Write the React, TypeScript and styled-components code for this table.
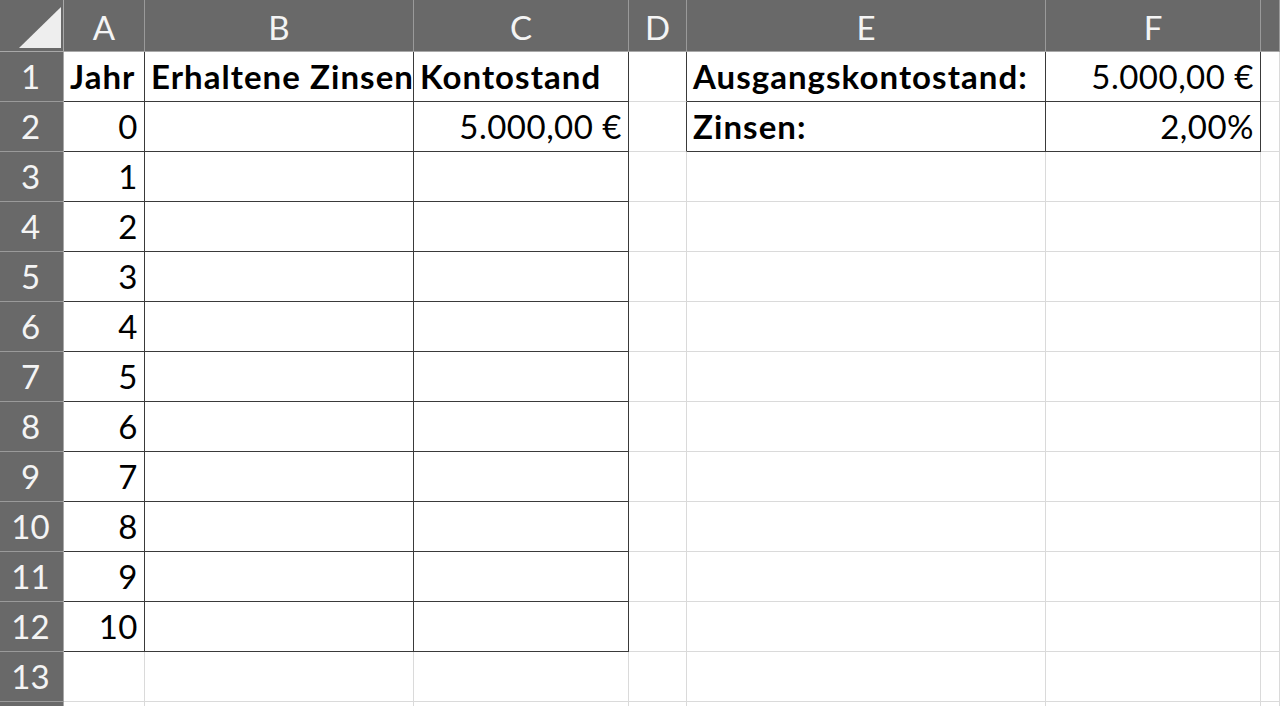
import styled, { createGlobalStyle } from 'styled-components'

const GlobalStyle = createGlobalStyle`
  html, body {
    margin: 0;
    padding: 0;
    background: #ffffff;
    overflow: hidden;
  }
`

const COLS = ['A', 'B', 'C', 'D', 'E', 'F', '']
const WIDTHS = [64, 81, 269, 215, 58, 359, 215, 19]

type CellData = {
  text?: string
  bold?: boolean
  right?: boolean
}

// which cells get the dark border (right / bottom)
const inTable = (row: number, col: number) =>
  (row >= 1 && row <= 12 && col >= 0 && col <= 2) ||
  (row >= 1 && row <= 2 && col >= 4 && col <= 5)

const darkRight = (row: number, col: number) =>
  inTable(row, col) || (row >= 1 && row <= 2 && col === 3)

const darkBottom = (row: number, col: number) => inTable(row, col)

const data: Record<string, CellData> = {
  '1-0': { text: 'Jahr', bold: true },
  '1-1': { text: 'Erhaltene Zinsen', bold: true },
  '1-2': { text: 'Kontostand', bold: true },
  '1-4': { text: 'Ausgangskontostand:', bold: true },
  '1-5': { text: '5.000,00 €', right: true },
  '2-2': { text: '5.000,00 €', right: true },
  '2-4': { text: 'Zinsen:', bold: true },
  '2-5': { text: '2,00%', right: true },
}
for (let r = 2; r <= 12; r++) {
  data[`${r}-0`] = { text: String(r - 2), right: true }
}

const Sheet = styled.div`
  display: grid;
  grid-template-columns: ${WIDTHS.map((w) => `${w}px`).join(' ')};
  grid-template-rows: 52px repeat(14, 50px);
  width: 1280px;
  height: 706px;
  overflow: hidden;
  font-family: Lato, 'Liberation Sans', sans-serif;
  font-size: 33px;
  color: #000;
`

const Corner = styled.div`
  background: #696969;
  border-right: 1px solid #a8a8a8;
  border-bottom: 1px solid #a8a8a8;
  box-sizing: border-box;
  position: relative;
`

const SelectAll = styled.svg`
  position: absolute;
  left: 0;
  top: 0;
`

const ColHeader = styled.div`
  background: #696969;
  color: #f4f4f4;
  border-right: 1px solid #9a9a9a;
  border-bottom: 1px solid #a8a8a8;
  box-sizing: border-box;
  display: flex;
  align-items: flex-end;
  justify-content: center;
  padding-bottom: 7px;
  line-height: 1;
`

const RowHeader = styled.div`
  background: #696969;
  color: #f4f4f4;
  border-right: 1px solid #a8a8a8;
  border-bottom: 1px solid #9a9a9a;
  box-sizing: border-box;
  display: flex;
  align-items: flex-end;
  justify-content: center;
  padding: 0 2px 8px 0;
  line-height: 1;
`

const Cell = styled.div<{ $darkRight: boolean; $darkBottom: boolean; $bold?: boolean; $right?: boolean }>`
  box-sizing: border-box;
  border-right: 1px solid ${(p) => (p.$darkRight ? '#3a3a3a' : '#dadada')};
  border-bottom: 1px solid ${(p) => (p.$darkBottom ? '#3a3a3a' : '#dadada')};
  display: flex;
  align-items: flex-end;
  justify-content: ${(p) => (p.$right ? 'flex-end' : 'flex-start')};
  padding: 0 6px 8px 6px;
  font-weight: ${(p) => (p.$bold ? 700 : 400)};
  letter-spacing: ${(p) => (p.$bold ? '1.05px' : '0.5px')};
  line-height: 1;
  white-space: nowrap;
  overflow: hidden;
`

export default function App() {
  const rows = Array.from({ length: 14 }, (_, i) => i + 1)
  return (
    <>
      <GlobalStyle />
      <Sheet>
        <Corner>
          <SelectAll width="64" height="52" viewBox="0 0 64 52">
            <polygon points="19,48 61,7 61,48" fill="#eeeeee" />
          </SelectAll>
        </Corner>
        {COLS.map((c, i) => (
          <ColHeader key={i}>{c}</ColHeader>
        ))}
        {rows.map((r) => (
          <Row key={r} row={r} />
        ))}
      </Sheet>
    </>
  )
}

// row 14 only peeks in at the bottom edge, its number is not visible
const Row = ({ row }: { row: number }) => (
  <>
    <RowHeader>{row < 14 ? row : ''}</RowHeader>
    {COLS.map((_, col) => {
      const d = data[`${row}-${col}`] || {}
      return (
        <Cell
          key={col}
          $darkRight={darkRight(row, col)}
          $darkBottom={darkBottom(row, col)}
          $bold={d.bold}
          $right={d.right}
        >
          {d.text}
        </Cell>
      )
    })}
  </>
)
